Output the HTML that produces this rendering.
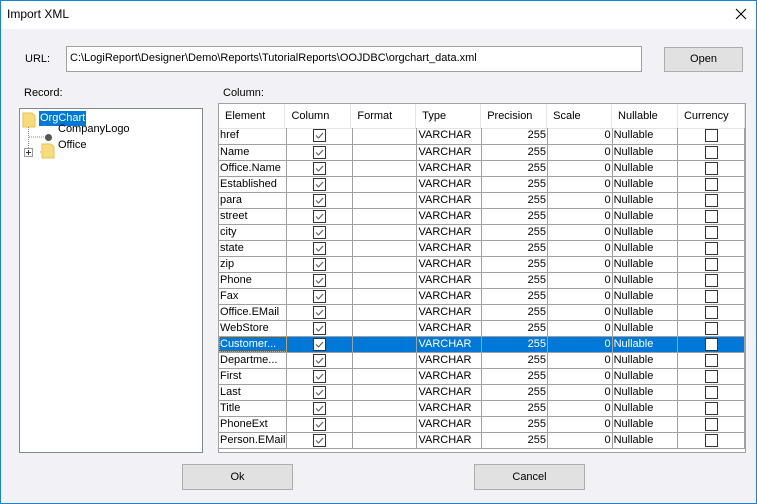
<!DOCTYPE html>
<html><head><meta charset="utf-8">
<style>
*{margin:0;padding:0;box-sizing:border-box}
body{width:757px;height:504px;overflow:hidden;font-family:"Liberation Sans",Arial,sans-serif;font-size:11px;color:#000;background:#fff}
.win{position:absolute;left:0;top:0;width:757px;height:504px;border:1px solid #1883d7;background:#f2f1f5}
.title{position:absolute;left:0;top:0;width:755px;height:28px;background:#fff}
.title span{position:absolute;left:6px;top:6px;font-size:12px;color:#000}
.x{position:absolute;left:733px;top:6px;width:14px;height:14px}
.abs{position:absolute}
.btn{position:absolute;background:#e1e1e1;border:1px solid #adadad;text-align:center;font-size:11px}
.tree{position:absolute;left:18px;top:107px;width:184px;height:345px;background:#fff;border:1px solid #828790}
.grid{position:absolute;left:217px;top:102px;width:528px;height:350px;background:#fff;border:1px solid #a0a0a0}
table{border-collapse:collapse;table-layout:fixed;position:absolute;left:0;top:0}
td{height:16px;border-right:1px solid #a0a0a0;border-bottom:1px solid #a0a0a0;padding:0 1px;white-space:nowrap;overflow:hidden;font-size:11px;line-height:15px}
th{height:24px;font-weight:normal;text-align:left;padding-left:6px;border-right:1px solid #e5e5e5;border-bottom:1px solid #e5e5e5;font-size:11px}
.r{text-align:right}
.cb{display:block;margin:0 auto;width:13px;height:13px;border:1px solid #333;background:#fff}
.ck{display:block;margin:0 auto}
tr.sel td{background:#0078d7;color:#fff}
</style></head><body>
<div class="win">
<div class="title"><span>Import XML</span>
<svg class="x" viewBox="0 0 14 14"><path d="M2 2L12 12M12 2L2 12" stroke="#000" stroke-width="1.1"/></svg></div>
<div class="abs" style="left:24px;top:52px">URL:</div>
<div class="abs" style="left:65px;top:45px;width:576px;height:26px;background:#fff;border:1px solid #a0a0a0;padding:5px 0 0 3px">C:\LogiReport\Designer\Demo\Reports\TutorialReports\OOJDBC\orgchart_data.xml</div>
<div class="btn" style="left:663px;top:46px;width:79px;height:25px;line-height:23px">Open</div>
<div class="abs" style="left:23px;top:86px">Record:</div>
<div class="abs" style="left:222px;top:86px">Column:</div>
<div class="tree">
 <svg class="abs" style="left:2px;top:3px" width="14" height="16"><path d="M1 1h9l3 3v11H1z" fill="#f8dc7c" stroke="#e8c050"/></svg>
 <div class="abs" style="left:19px;top:2px;background:#0078d7;color:#fff;padding:1px 1px;line-height:13px">OrgChart</div>
 <svg class="abs" style="left:8px;top:18px" width="50" height="30"><path d="M0.5 0V25M1 10H16M12 25H18" stroke="#888" stroke-dasharray="1 1"/><circle cx="20.5" cy="10.5" r="3.5" fill="#555"/></svg>
 <svg class="abs" style="left:4px;top:39px" width="9" height="9"><rect x=".5" y=".5" width="8" height="8" fill="#fff" stroke="#999"/><path d="M2 4.5h5M4.5 2v5" stroke="#333"/></svg>
 <div class="abs" style="left:38px;top:14px">CompanyLogo</div>
 <svg class="abs" style="left:21px;top:34px" width="14" height="16"><path d="M1 1h9l3 3v11H1z" fill="#f8dc7c" stroke="#e8c050"/></svg>
 <div class="abs" style="left:38px;top:30px">Office</div>
</div>
<div class="grid">
<table>
<colgroup><col style="width:66px"><col style="width:66px"><col style="width:65px"><col style="width:65px"><col style="width:66px"><col style="width:65px"><col style="width:66px"><col style="width:67px"></colgroup>
<tr><th>Element</th><th>Column</th><th>Format</th><th>Type</th><th>Precision</th><th>Scale</th><th>Nullable</th><th>Currency</th></tr>
</table>
<table id="t" style="top:24px">
<colgroup><col style="width:66px"><col style="width:66px"><col style="width:65px"><col style="width:65px"><col style="width:66px"><col style="width:65px"><col style="width:66px"><col style="width:67px"></colgroup>
</table>
</div>
<div class="btn" style="left:181px;top:463px;width:111px;height:26px;line-height:24px">Ok</div>
<div class="btn" style="left:473px;top:463px;width:111px;height:26px;line-height:24px">Cancel</div>
</div>
<script>
var n=["href","Name","Office.Name","Established","para","street","city","state","zip","Phone","Fax","Office.EMail","WebStore","Customer...","Departme...","First","Last","Title","PhoneExt","Person.EMail"];
var ck='<svg class="ck" width="13" height="13"><rect x=".5" y=".5" width="12" height="12" fill="#fff" stroke="#333"/><path d="M3 6.5l2.5 2.5 4.5-5" fill="none" stroke="#555" stroke-width="1.1"/></svg>';
var h="";n.forEach(function(e,i){h+='<tr'+(i==13?' class="sel"':'')+'><td'+(i==13?' style="outline:1px dotted #f0a030;outline-offset:-1px"':'')+'>'+e+'</td><td>'+ck+'</td><td></td><td>VARCHAR</td><td class="r">255</td><td class="r">0</td><td>Nullable</td><td><span class="cb"></span></td></tr>';});
document.getElementById("t").innerHTML+=h;
</script>
</body></html>
